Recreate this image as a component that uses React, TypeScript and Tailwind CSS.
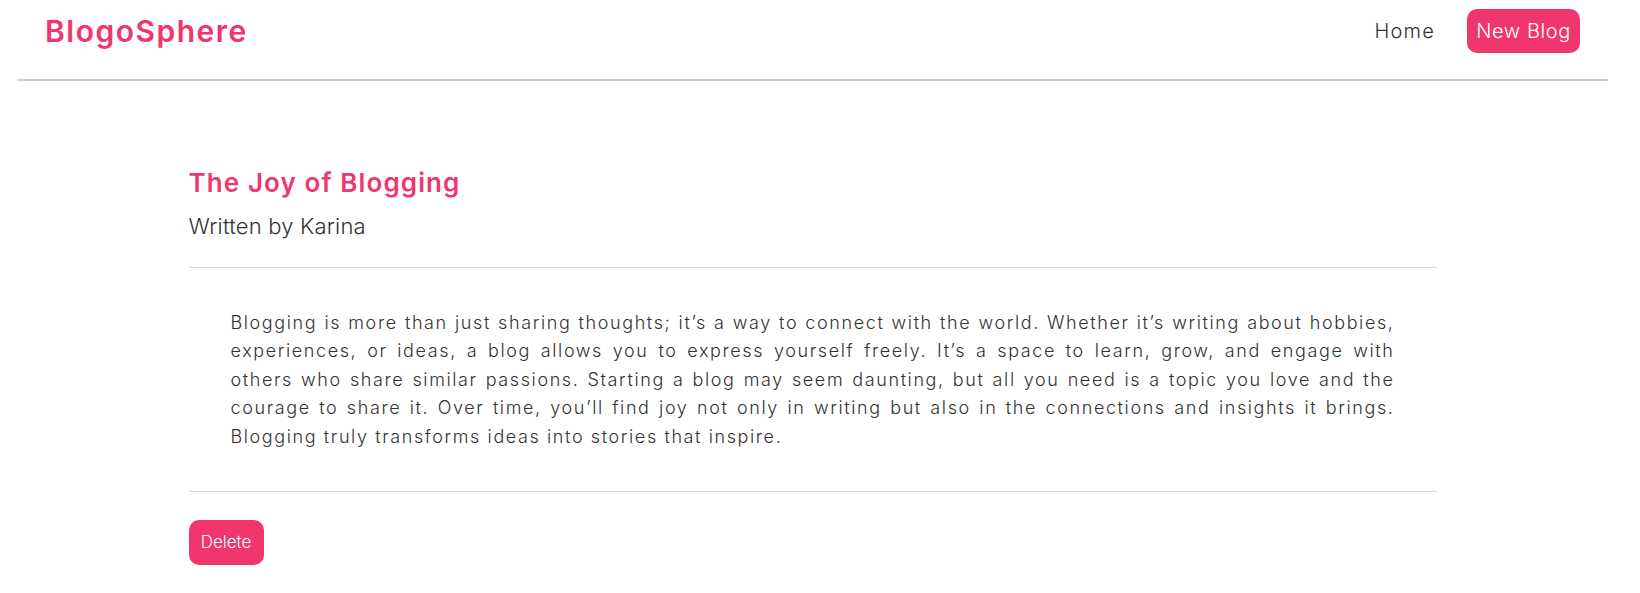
import React from "react";

const lines = [
  "Blogging is more than just sharing thoughts; it’s a way to connect with the world. Whether it’s writing about hobbies,",
  "experiences, or ideas, a blog allows you to express yourself freely. It’s a space to learn, grow, and engage with",
  "others who share similar passions. Starting a blog may seem daunting, but all you need is a topic you love and the",
  "courage to share it. Over time, you’ll find joy not only in writing but also in the connections and insights it brings.",
  "Blogging truly transforms ideas into stories that inspire.",
];

const App: React.FC = () => {
  return (
    <div className="min-h-screen w-[1625px] bg-white font-['Inter',sans-serif] text-[#333333]">
      <nav className="mx-[17px] flex items-center border-b-2 border-[#cccccc] px-[28px] pt-[9px] pb-[26px]">
        <h1 className="text-[30px] leading-[44px] font-semibold tracking-[1.5px] text-[#f1356d]">BlogoSphere</h1>
        <div className="ml-auto flex items-center gap-[32px]">
          <a href="#" className="text-[20px] font-light tracking-[1.2px] text-[#333333]">
            Home
          </a>
          <a
            href="#"
            className="flex h-[44px] w-[113px] items-center justify-center rounded-[10px] bg-[#f1356d] text-[20px] font-light tracking-[0.6px] text-white"
          >
            New Blog
          </a>
        </div>
      </nav>

      <main className="mx-auto w-[1248px] pt-[84px]">
        <article>
          <h2 className="text-[26px] leading-[36px] font-semibold tracking-[1.1px] text-[#f1356d]">
            The Joy of Blogging
          </h2>
          <p className="mt-[10px] text-[22px] leading-[30px] font-light tracking-[0.2px]">Written by Karina</p>

          <div className="mt-[26px] h-px bg-[#d6d6d6]" />

          <div className="px-[42px] pt-[41px] pb-[40px] text-[18px] leading-[28.4px] font-light tracking-[1.6px] text-justify">
            {lines.map((line, i) => (
              <span
                key={i}
                className={i < lines.length - 1 ? "block [text-align-last:justify]" : "block"}
              >
                {line}
              </span>
            ))}
          </div>

          <div className="h-px bg-[#d6d6d6]" />

          <button className="mt-[28px] h-[45px] w-[75px] rounded-[10px] bg-[#f1356d] text-[17px] font-light text-white">
            Delete
          </button>
        </article>
      </main>
    </div>
  );
};

export default App;
